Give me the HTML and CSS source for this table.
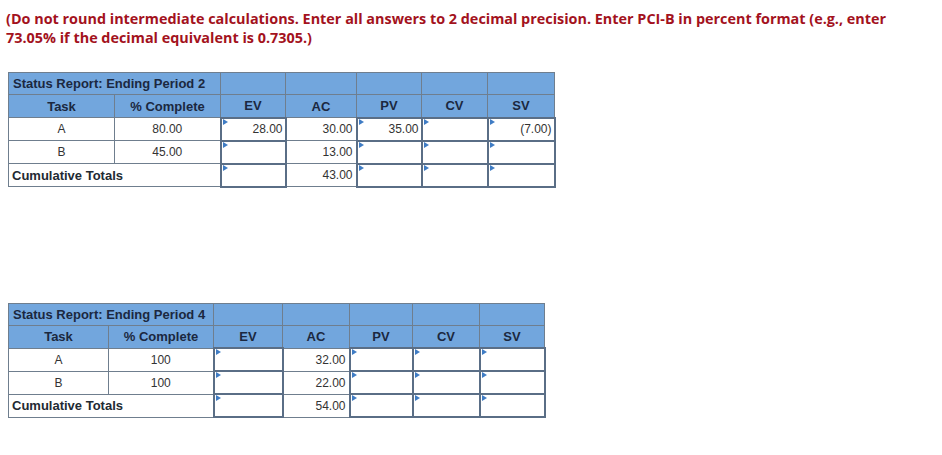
FILE: index.html
```html
<!DOCTYPE html>
<html>
<head>
<meta charset="utf-8">
<link rel="stylesheet" href="styles.css">
</head>
<body>
<div class="page">
  <p class="note">(Do not round intermediate calculations. Enter all answers to 2 decimal precision. Enter PCI-B in percent format (e.g., enter 73.05% if the decimal equivalent is 0.7305.)</p>

  <table class="report r1">
    <colgroup>
      <col style="width:106px"><col style="width:106px"><col style="width:65px"><col style="width:71px"><col style="width:65px"><col style="width:66px"><col style="width:67px">
    </colgroup>
    <tr class="title"><th colspan="2" class="tl">Status Report: Ending Period 2</th><th></th><th></th><th></th><th></th><th></th></tr>
    <tr class="head"><th>Task</th><th>% Complete</th><th>EV</th><th>AC</th><th>PV</th><th>CV</th><th>SV</th></tr>
    <tr><td class="c">A</td><td class="c">80.00</td><td class="in">28.00</td><td class="r">30.00</td><td class="in">35.00</td><td class="in"></td><td class="in">(7.00)</td></tr>
    <tr><td class="c">B</td><td class="c">45.00</td><td class="in"></td><td class="r">13.00</td><td class="in"></td><td class="in"></td><td class="in"></td></tr>
    <tr><td colspan="2" class="tot">Cumulative Totals</td><td class="in"></td><td class="r">43.00</td><td class="in"></td><td class="in"></td><td class="in"></td></tr>
  </table>

  <table class="report r2">
    <colgroup>
      <col style="width:100px"><col style="width:105px"><col style="width:69px"><col style="width:67px"><col style="width:63px"><col style="width:67px"><col style="width:65px">
    </colgroup>
    <tr class="title"><th colspan="2" class="tl">Status Report: Ending Period 4</th><th></th><th></th><th></th><th></th><th></th></tr>
    <tr class="head"><th>Task</th><th>% Complete</th><th>EV</th><th>AC</th><th>PV</th><th>CV</th><th>SV</th></tr>
    <tr><td class="c">A</td><td class="c">100</td><td class="in"></td><td class="r">32.00</td><td class="in"></td><td class="in"></td><td class="in"></td></tr>
    <tr><td class="c">B</td><td class="c">100</td><td class="in"></td><td class="r">22.00</td><td class="in"></td><td class="in"></td><td class="in"></td></tr>
    <tr><td colspan="2" class="tot">Cumulative Totals</td><td class="in"></td><td class="r">54.00</td><td class="in"></td><td class="in"></td><td class="in"></td></tr>
  </table>
</div>
</body>
</html>
```

FILE: styles.css
```css
html, body {
  margin: 0;
  padding: 0;
  background: #ffffff;
}

.page {
  padding: 9px 0 0 6px;
}

.note {
  margin: 0;
  width: 900px;
  font-family: "Open Sans", Lato, sans-serif;
  font-weight: 700;
  font-size: 14.4px;
  line-height: 19px;
  color: #a3121d;
}

.report {
  border-collapse: collapse;
  table-layout: fixed;
  margin-left: 2px;
  font-family: "Liberation Sans", Arial, sans-serif;
  font-size: 12px;
  color: #333333;
}

.r1 {
  margin-top: 25px;
  width: 546px;
}

.r2 {
  margin-top: 115px;
  width: 536px;
}

.report th,
.report td {
  border: 1px solid #6f7e8e;
  height: 21px;
  padding: 0 3px;
  box-sizing: border-box;
}

.report tr {
  height: 23px;
}

.report tr.title {
  height: 22px;
}

.report th {
  background: #72a6dd;
  color: #1b2840;
  font-weight: 700;
  font-size: 13px;
  text-align: center;
}

.report th.tl {
  text-align: left;
  padding-left: 4px;
}

.c {
  text-align: center;
}

.r {
  text-align: right;
}

.tot {
  text-align: left;
  font-weight: 700;
  font-size: 13px;
  color: #222a33;
  padding-left: 4px;
}

.report td.in {
  border: 2px solid #5a6e86;
  text-align: right;
  position: relative;
  padding-right: 2px;
}

.report td.in::before {
  content: "";
  position: absolute;
  left: 1px;
  top: 0;
  border-left: 5px solid #3f7cc4;
  border-top: 3px solid transparent;
  border-bottom: 3px solid transparent;
}
```
